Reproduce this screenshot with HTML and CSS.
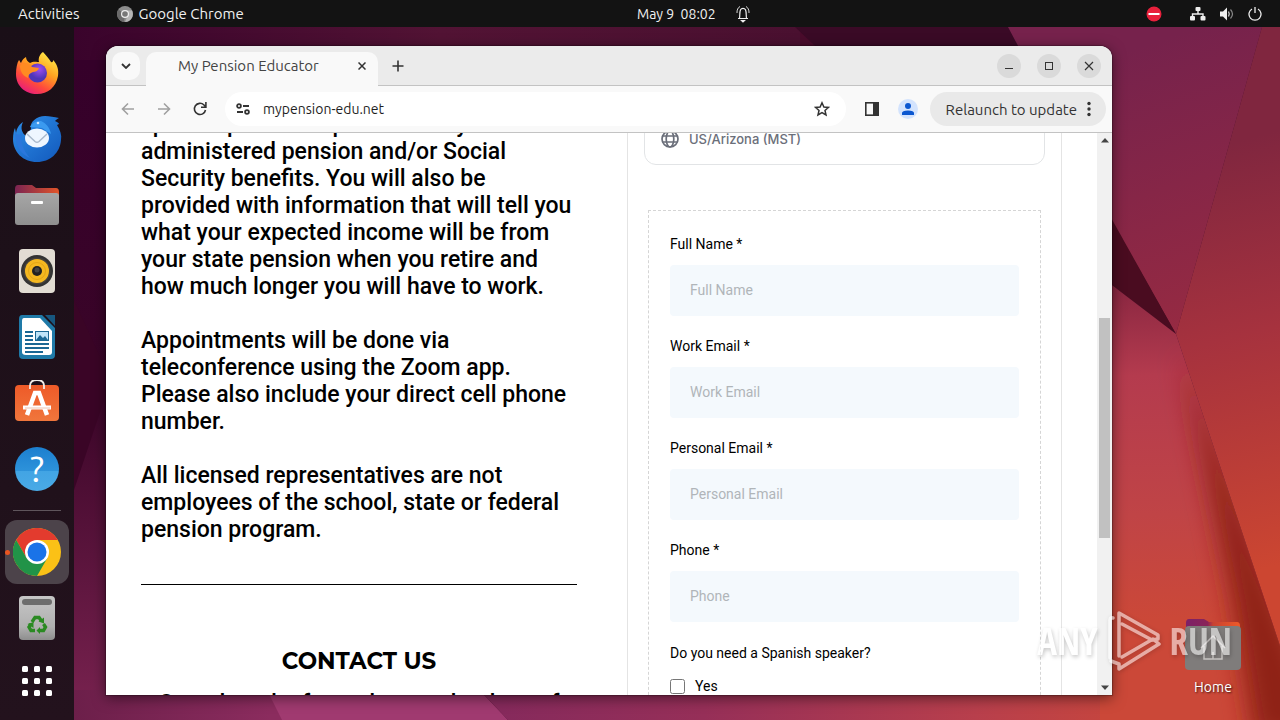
FILE: index.html
```html
<!DOCTYPE html>
<html lang="en">

<head>
    <meta charset="UTF-8">
    <meta name="viewport" content="width=device-width, initial-scale=1.0">
    <title>My Pension Educator</title>
    <link rel="stylesheet" href="styles.css">
</head>

<body>
    <!-- wallpaper -->
    <svg class="wallpaper" viewBox="0 0 1280 720" preserveAspectRatio="none" aria-hidden="true">
        <defs>
            <linearGradient id="wLeft" x1="0" y1="0" x2="0" y2="1">
                <stop offset="0" stop-color="#35002a" />
                <stop offset=".5" stop-color="#3a0528" />
                <stop offset="1" stop-color="#7a2350" />
            </linearGradient>
            <linearGradient id="wTop" x1="0" y1="0" x2="1" y2="0">
                <stop offset="0" stop-color="#35002a" />
                <stop offset=".55" stop-color="#521334" />
                <stop offset="1" stop-color="#4a1030" />
            </linearGradient>
            <linearGradient id="wBottom" x1="500" y1="0" x2="1180" y2="0" gradientUnits="userSpaceOnUse">
                <stop offset="0" stop-color="#862a5c" />
                <stop offset=".3" stop-color="#962f58" />
                <stop offset=".7" stop-color="#b83f4c" />
                <stop offset="1" stop-color="#cb4838" />
            </linearGradient>
            <linearGradient id="wLow" x1="74" y1="0" x2="270" y2="0" gradientUnits="userSpaceOnUse">
                <stop offset="0" stop-color="#6c1f4a" />
                <stop offset="1" stop-color="#8b2c5e" />
            </linearGradient>
            <linearGradient id="wUpper" x1="1100" y1="60" x2="1190" y2="330" gradientUnits="userSpaceOnUse">
                <stop offset="0" stop-color="#76224c" />
                <stop offset="1" stop-color="#962a42" />
            </linearGradient>
            <linearGradient id="wRight" x1="1200" y1="150" x2="1300" y2="560" gradientUnits="userSpaceOnUse">
                <stop offset="0" stop-color="#80263f" />
                <stop offset=".45" stop-color="#a6323e" />
                <stop offset="1" stop-color="#cc4631" />
            </linearGradient>
            <linearGradient id="wRed" x1="1140" y1="270" x2="1150" y2="620" gradientUnits="userSpaceOnUse">
                <stop offset="0" stop-color="#82233f" />
                <stop offset=".3" stop-color="#b43b4e" />
                <stop offset=".7" stop-color="#c04446" />
                <stop offset="1" stop-color="#cb4838" />
            </linearGradient>
            <clipPath id="redClip">
                <path d="M1100 276L1176 334L1280 646V720H1100Z" />
            </clipPath>
            <filter id="soft" x="-60%" width="220%">
                <feGaussianBlur stdDeviation="12" />
            </filter>
        </defs>
        <rect width="1280" height="720" fill="#4a0c2c" />
        <rect width="800" height="60" fill="url(#wTop)" />
        <path d="M795 27H1008L1030 60H830Z" fill="#3a0a26" />
        <path d="M0 60H110V720H0Z" fill="url(#wLeft)" />
        <path d="M74 300L104 365V400L74 490Z" fill="#3a0526" />
        <path d="M74 690H270L285 720H74Z" fill="url(#wLow)" />
        <path d="M262 680H470L508 720H282Z" fill="#a03a70" />
        <path d="M470 680H1280V720H508Z" fill="url(#wBottom)" />
        <path d="M1008 27H1262L1176 334L1100 200Z" fill="url(#wUpper)" />
        <path d="M1262 27H1280V646L1176 334Z" fill="url(#wRight)" />
        <path d="M1100 198L1176 334L1100 276Z" fill="#4a0c20" />
        <path d="M1100 276L1176 334L1280 646V720H1100Z" fill="url(#wRed)" />
        <g clip-path="url(#redClip)">
            <path d="M1182 352L1330 740H1254L1232 600Z" fill="#8f2019" filter="url(#soft)" />
        </g>
    </svg>

    <header class="topbar">
        <div class="topbar-left">
            <button>Activities</button>
            <button class="app-menu">
                <svg width="16" height="16" viewBox="0 0 16 16">
                    <circle cx="8" cy="8" r="8" fill="#8d8d8d" />
                    <path d="M8 8L1.5 3.5A8 8 0 0 0 7 16Z" fill="#6a6a6a" />
                    <path d="M8 4.500H15A8 8 0 0 1 8 16L11 9Z" fill="#b5b5b5" />
                    <circle cx="8" cy="8" r="4" fill="#eee" />
                    <circle cx="8" cy="8" r="2.800" fill="#777" />
                </svg>
                Google Chrome
            </button>
        </div>
        <div class="topbar-clock">
            <time>May 9&nbsp; 08:02</time>
            <svg width="14" height="18" viewBox="0 0 14 18" fill="none" stroke="#eee" stroke-width="1.200">
                <path d="M2 13.500H12M3.500 13C4 11 3.500 7 4.500 4.800C5.500 3 8.500 3 9.500 4.800C10.500 7 10 11 10.500 13" />
                <path d="M1 8C.8 5 2 2.500 4 1.500M13 8C13.200 5 12 2.500 10 1.500" stroke-width=".9" />
                <path d="M5.500 15.500H8.500L7 17Z" fill="#eee" />
            </svg>
        </div>
        <div class="topbar-status">
            <svg class="busy" width="16" height="16" viewBox="0 0 16 16">
                <circle cx="8" cy="8" r="7.500" fill="#e8203c" />
                <rect x="2.500" y="7" width="11" height="2" fill="#fff" />
            </svg>
            <svg width="16" height="14" viewBox="0 0 16 14">
                <rect x="5.500" width="5" height="4" rx="1" fill="#eee" />
                <rect x="0" y="9" width="5" height="4.500" rx="1" fill="#eee" />
                <rect x="10.500" y="9" width="5" height="4.500" rx="1" fill="#eee" />
                <path d="M8 4V7M2.500 9V7H13V9" fill="none" stroke="#eee" stroke-width="1.400" />
            </svg>
            <svg width="16" height="14" viewBox="0 0 16 14">
                <path d="M1 4.500H4L8 .5V13.500L4 9.500H1Z" fill="#eee" />
                <path d="M9.500 4.500Q11 7 9.500 9.500" fill="none" stroke="#ccc" stroke-width="1.300" />
                <path d="M11.500 2.500Q15.500 7 11.500 11.500" fill="none" stroke="#888" stroke-width="1.200" />
            </svg>
            <svg width="14" height="14" viewBox="0 0 14 14" fill="none" stroke="#eee" stroke-width="1.300">
                <path d="M4 2A6 6 0 1 0 10 2M7 0V6" />
            </svg>
        </div>
    </header>

    <main class="desktop">
        <nav class="dock" aria-label="Dock">
            <button class="dock-item" aria-label="Firefox">
                <svg width="46" height="46" viewBox="0 0 46 46">
                    <defs>
                        <linearGradient id="ff" x1=".8" y1="0" x2=".2" y2="1">
                            <stop offset="0" stop-color="#fff14a" />
                            <stop offset=".4" stop-color="#ffa020" />
                            <stop offset=".7" stop-color="#ff4a3c" />
                            <stop offset="1" stop-color="#e31587" />
                        </linearGradient>
                        <radialGradient id="ffGlobe" cx=".6" cy=".3">
                            <stop offset="0" stop-color="#a04cf0" />
                            <stop offset="1" stop-color="#4e35b8" />
                        </radialGradient>
                    </defs>
                    <path d="M29 2C32 5 35 9 37 12C39 13 39 11 39 10C43 14 45 19 44 26C42 37 34 44 23 44C11 44 2 36 2 24C2 18 3 13 5 10C6 11 6 12 7 13C8 10 10 8 12 7C12 10 14 12 16 13C19 11 23 12 25 12C24 8 26 4 29 2Z" fill="url(#ff)" />
                    <circle cx="23.500" cy="23" r="9.500" fill="url(#ffGlobe)" />
                    <path d="M6 16C10 11 15 13 18 17L25 18C24 21 21 22 19 22C16 23 14 25 14 28C9 26 6 21 6 16Z" fill="#ff8b22" />
                </svg>
            </button>
            <button class="dock-item" aria-label="Thunderbird">
                <svg width="50" height="50" viewBox="0 0 50 50">
                    <defs>
                        <linearGradient id="tb" x1="0" y1="0" x2="1" y2="1">
                            <stop offset="0" stop-color="#2e90ea" />
                            <stop offset="1" stop-color="#1258bb" />
                        </linearGradient>
                    </defs>
                    <path d="M11 8C8 14 10 19 14 22L19 15C17 8 25 2 33 2C38 2 42 3 47 4C45 5 44 6 43 7C45 8 47 9 47 10L45 11C48 16 50 21 49 26C48 39 38 48 25 48C11 48 1 38 1 25C1 20 2 16 3 14L4 19C5 13 8 10 11 8Z" fill="url(#tb)" />
                    <path d="M3 18C3 31 8 40 18 44C11 36 8 28 10 19C8 21 6 22 3 18Z" fill="#2a77dc" />
                    <path d="M18 13C20 9 24 7 29 7C34 9 38 14 39 20L30 14Z" fill="#3b9af0" />
                    <ellipse cx="25" cy="24" rx="12" ry="9.500" fill="#eef6ff" />
                    <path d="M15 20L23 27.500Q25 29 27 27.500L35 20" fill="none" stroke="#a9b9cc" stroke-width="1.500" />
                    <circle cx="26" cy="9" r="1.300" fill="#cfe6ff" />
                </svg>
            </button>
            <button class="dock-item" aria-label="Files">
                <svg width="46" height="42" viewBox="0 0 46 42">
                    <defs>
                        <linearGradient id="fold" x1="0" x2="1">
                            <stop offset="0" stop-color="#7a2452" />
                            <stop offset="1" stop-color="#e2552a" />
                        </linearGradient>
                        <linearGradient id="foldFront" x1="0" y1="0" x2="0" y2="1">
                            <stop offset="0" stop-color="#a6a6a6" />
                            <stop offset="1" stop-color="#8f8f8f" />
                        </linearGradient>
                    </defs>
                    <path d="M4 1H18L22 4H42Q45 4 45 8V20H1V5Q1 1 4 1Z" fill="url(#fold)" />
                    <rect x="1" y="9" width="44" height="32" rx="3" fill="url(#foldFront)" />
                    <rect x="17" y="17" width="12" height="3" rx="1" fill="#fff" />
                </svg>
            </button>
            <button class="dock-item" aria-label="Rhythmbox">
                <svg width="38" height="46" viewBox="0 0 38 46">
                    <rect x="1" y="1" width="36" height="44" rx="4" fill="#e2dcd3" />
                    <circle cx="19" cy="23" r="16" fill="#333" />
                    <circle cx="19" cy="23" r="13.500" fill="#45413c" />
                    <circle cx="19" cy="23" r="12" fill="#f5b820" />
                    <circle cx="19" cy="23" r="8.500" fill="none" stroke="#e3a616" />
                    <circle cx="19" cy="23" r="5" fill="#222" />
                    <circle cx="19" cy="22" r="2.500" fill="#444" />
                </svg>
            </button>
            <button class="dock-item" aria-label="LibreOffice Writer">
                <svg width="38" height="46" viewBox="0 0 38 46">
                    <path d="M4 1H24L37 14V41Q37 45 33 45H5Q1 45 1 41V5Q1 1 4 1Z" fill="#1f7aa8" />
                    <path d="M27 1H37V12Z" fill="#17577f" />
                    <path d="M6 4H22L34 17V38Q34 41 31 41H8Q4 41 4 38V7Q4 4 6 4Z" fill="#fff" />
                    <path d="M7 18H15M7 22H15M7 26H15M7 30H31M7 34H31M7 38H25" stroke="#1b6794" stroke-width="1.800" />
                    <rect x="17.500" y="17.500" width="13" height="9" fill="#bfe3f8" stroke="#1b6794" />
                    <path d="M18 26L22 21L25 24L27 22L30 26Z" fill="#1b6794" />
                </svg>
            </button>
            <button class="dock-item" aria-label="Ubuntu Software">
                <svg width="46" height="46" viewBox="0 0 46 46">
                    <defs>
                        <linearGradient id="bag" x1="0" y1="0" x2="0" y2="1">
                            <stop offset="0" stop-color="#ee5a28" />
                            <stop offset="1" stop-color="#f0763c" />
                        </linearGradient>
                    </defs>
                    <rect x="1" y="5" width="44" height="36" rx="4" fill="url(#bag)" />
                    <path d="M16 9V6Q16 0 23 0Q30 0 30 6V9" fill="none" stroke="#f3ece6" stroke-width="1.800" />
                    <path d="M13 35L21 13H25L33 35" fill="none" stroke="#fff" stroke-width="4.500" />
                    <path d="M9 27.500H37" stroke="#fff" stroke-width="4" />
                    <path d="M11 28H36" stroke="#e8b49c" stroke-width=".8" />
                </svg>
            </button>
            <button class="dock-item help" aria-label="Help"><span>?</span></button>
            <hr>
            <button class="dock-item active" aria-label="Google Chrome">
                <svg width="48" height="48" viewBox="0 0 48 48">
                    <circle cx="24" cy="24" r="24" fill="#fbc116" />
                    <path d="M24 24V12H44.800A24 24 0 0 0 3.200 12L13.600 30Z" fill="#e33b2e" />
                    <path d="M3.200 12A24 24 0 0 0 24 48L34.400 30L24 34L13.600 30Z" fill="#219348" />
                    <circle cx="24" cy="24" r="12" fill="#fff" />
                    <circle cx="24" cy="24" r="9.500" fill="#1a73e8" />
                </svg>
            </button>
            <button class="dock-item" aria-label="Trash">
                <svg width="38" height="46" viewBox="0 0 38 46">
                    <defs>
                        <linearGradient id="bin" x1="0" y1="0" x2="0" y2="1">
                            <stop offset="0" stop-color="#c6c6c6" />
                            <stop offset=".7" stop-color="#b0b0b0" />
                            <stop offset="1" stop-color="#8e8e8e" />
                        </linearGradient>
                    </defs>
                    <rect x="1" y="1" width="36" height="44" rx="4" fill="url(#bin)" />
                    <rect x="4" y="4" width="30" height="6" rx="3" fill="#6d6d6d" />
                    <path d="M14 27L17 22.500H21L23.500 26M25.500 29L27.500 32L25.500 35.500H21M17 35.500H13L11 32L13 29" fill="none" stroke="#2a8a22" stroke-width="3.400" />
                    <path d="M26 22.500V28.500L20.500 26.500ZM22 32V39L18.500 35.500ZM9.500 29L15.500 27L15.500 33Z" fill="#2a8a22" />
                </svg>
            </button>
            <button class="dock-item apps" aria-label="Show Applications">
                <svg width="30" height="30" viewBox="0 0 30 30" fill="#fff">
                    <rect width="6" height="6" rx="1.500" /><rect x="12" width="6" height="6" rx="1.500" /><rect x="24" width="6" height="6" rx="1.500" />
                    <rect y="12" width="6" height="6" rx="1.500" /><rect x="12" y="12" width="6" height="6" rx="1.500" /><rect x="24" y="12" width="6" height="6" rx="1.500" />
                    <rect y="24" width="6" height="6" rx="1.500" /><rect x="12" y="24" width="6" height="6" rx="1.500" /><rect x="24" y="24" width="6" height="6" rx="1.500" />
                </svg>
            </button>
        </nav>

        <section class="workspace">
            <a class="home" href="#">
                <svg width="56" height="52" viewBox="0 0 56 52">
                    <defs>
                        <linearGradient id="homeBack" x1="0" x2="1">
                            <stop offset="0" stop-color="#7c2068" />
                            <stop offset=".4" stop-color="#8a2458" />
                            <stop offset=".5" stop-color="#c84232" />
                            <stop offset="1" stop-color="#ee5a28" />
                        </linearGradient>
                    </defs>
                    <path d="M4 1H19L24 4H52Q55 4 55 8V20H1V5Q1 1 4 1Z" fill="url(#homeBack)" />
                    <rect x="0" y="8" width="56" height="44" rx="4" fill="#7f7c7b" />
                    <path d="M16 30L28 18L40 30M19 28V41H37V28M28 41V34" fill="none" stroke="#c9c5c3" stroke-width="1.500" />
                </svg>
                Home
            </a>

            <div class="window">
                <div class="tabstrip">
                    <button class="tab-search" aria-label="Search tabs">
                        <svg width="10" height="6" viewBox="0 0 10 6" fill="none" stroke="#333" stroke-width="1.800"><path d="M1 1L5 5L9 1" /></svg>
                    </button>
                    <div class="tab">
                        <span class="tab-title">My Pension Educator</span>
                        <button class="tab-close" aria-label="Close tab">
                            <svg width="8" height="8" viewBox="0 0 8 8" stroke="#333" stroke-width="1.500"><path d="M.5.5L7.500 7.500M7.500.5L.5 7.500" /></svg>
                        </button>
                    </div>
                    <button class="new-tab" aria-label="New tab">
                        <svg width="12" height="12" viewBox="0 0 12 12" stroke="#333" stroke-width="1.600"><path d="M6 .5V11.500M.5 6H11.500" /></svg>
                    </button>
                    <div class="window-buttons">
                        <button aria-label="Minimize"><svg width="10" height="10" viewBox="0 0 10 10" stroke="#333"><path d="M1 7.500H9" /></svg></button>
                        <button aria-label="Maximize"><svg width="10" height="10" viewBox="0 0 10 10" fill="none" stroke="#333"><rect x="1.500" y="1.500" width="7" height="7" /></svg></button>
                        <button aria-label="Close"><svg width="10" height="10" viewBox="0 0 10 10" stroke="#333" stroke-width="1.200"><path d="M1 1L9 9M9 1L1 9" /></svg></button>
                    </div>
                </div>

                <div class="toolbar">
                    <button class="tool" aria-label="Back">
                        <svg width="14" height="14" viewBox="0 0 14 14" fill="none" stroke="#a0a0a0" stroke-width="1.600"><path d="M13 7H2M7 1.500L1.500 7L7 12.500" /></svg>
                    </button>
                    <button class="tool" aria-label="Forward">
                        <svg width="14" height="14" viewBox="0 0 14 14" fill="none" stroke="#a0a0a0" stroke-width="1.600"><path d="M1 7H12M7 1.500L12.500 7L7 12.500" /></svg>
                    </button>
                    <button class="tool" aria-label="Reload">
                        <svg width="14" height="14" viewBox="0 0 14 14" fill="none" stroke="#333" stroke-width="1.600"><path d="M12.500 8A5.600 5.600 0 1 1 11 3L12.500 4.500M12.900 0V5.200H8" /></svg>
                    </button>
                    <div class="omnibox">
                        <button class="site-info" aria-label="Site information">
                            <svg width="14" height="12" viewBox="0 0 14 12" fill="none" stroke="#333" stroke-width="1.800"><circle cx="3" cy="3" r="1.900" /><path d="M7 3H13M1 9H7" /><circle cx="11" cy="9" r="1.900" /></svg>
                        </button>
                        <input class="url" type="text" value="mypension-edu.net" aria-label="Address" spellcheck="false">
                        <button class="site-info" aria-label="Bookmark this tab">
                            <svg width="16" height="16" viewBox="0 0 16 16" fill="none" stroke="#333" stroke-width="1.500"><path d="M8 1.800L9.900 6L14.500 6.400L11 9.500L12 14L8 11.600L4 14L5 9.500L1.500 6.400L6.100 6Z" /></svg>
                        </button>
                    </div>
                    <button class="tool" aria-label="Side panel">
                        <svg width="16" height="16" viewBox="0 0 16 16"><rect x="1.800" y="1.800" width="12.400" height="12.400" fill="none" stroke="#333" stroke-width="1.600" /><rect x="9" y="2" width="5" height="12" fill="#333" /></svg>
                    </button>
                    <button class="tool" aria-label="Profile">
                        <svg width="20" height="20" viewBox="0 0 20 20"><circle cx="10" cy="10" r="10" fill="#d3e3fd" /><circle cx="10" cy="7" r="3" fill="#0b57d0" /><path d="M4 16V14Q4 11.500 10 11.500Q16 11.500 16 14V16Z" fill="#0b57d0" /></svg>
                    </button>
                    <button class="relaunch">
                        Relaunch to update
                        <svg width="4" height="16" viewBox="0 0 4 16" fill="#333"><circle cx="2" cy="2.500" r="1.700" /><circle cx="2" cy="8" r="1.700" /><circle cx="2" cy="13.500" r="1.700" /></svg>
                    </button>
                </div>

                <div class="viewport">
                    <div class="page">
                        <div class="info">
                            <p>specific plans and protection by<br>
                                administered pension and/or Social<br>
                                Security benefits. You will also be<br>
                                provided with information that will tell you<br>
                                what your expected income will be from<br>
                                your state pension when you retire and<br>
                                how much longer you will have to work.</p>
                            <p>Appointments will be done via<br>
                                teleconference using the Zoom app.<br>
                                Please also include your direct cell phone<br>
                                number.</p>
                            <p>All licensed representatives are not<br>
                                employees of the school, state or federal<br>
                                pension program.</p>
                            <hr>
                            <h2>CONTACT US</h2>
                            <p class="contact">Complete the form above to book one f</p>
                        </div>
                        <div class="booking">
                            <div class="timezone">
                                <svg width="18" height="18" viewBox="0 0 18 18" fill="none" stroke="#6b6f7a" stroke-width="1.700">
                                    <circle cx="9" cy="9" r="8" />
                                    <ellipse cx="9" cy="9" rx="3.800" ry="8" />
                                    <path d="M1.500 6H16.500M1.500 12H16.500" />
                                </svg>
                                US/Arizona (MST)
                            </div>
                            <form class="form">
                                <label for="fullName">Full Name *</label>
                                <input class="field" type="text" id="fullName" placeholder="Full Name">
                                <label for="workEmail">Work Email *</label>
                                <input class="field" type="email" id="workEmail" placeholder="Work Email">
                                <label for="personalEmail">Personal Email *</label>
                                <input class="field" type="email" id="personalEmail" placeholder="Personal Email">
                                <label for="phone">Phone *</label>
                                <input class="field" type="tel" id="phone" placeholder="Phone">
                                <fieldset>
                                    <legend>Do you need a Spanish speaker?</legend>
                                    <label class="check"><input type="checkbox"> Yes</label>
                                </fieldset>
                            </form>
                        </div>
                    </div>
                    <div class="scrollbar">
                        <svg width="8" height="5" viewBox="0 0 8 5" fill="#444"><path d="M0 4.500L4 0L8 4.500Z" /></svg>
                        <div class="track"><div class="thumb"></div></div>
                        <svg width="8" height="5" viewBox="0 0 8 5" fill="#444"><path d="M0 .5L4 5L8 .5Z" /></svg>
                    </div>
                </div>
            </div>
        </section>
    </main>

    <!-- watermark -->
    <div class="watermark">
        <span>ANY</span>
        <svg width="56" height="62" viewBox="0 0 56 62" fill="none" stroke="#fff" stroke-width="3.500" stroke-linejoin="round" stroke-linecap="round">
            <path d="M4 48V10Q4 7 7 8M13 46V3L52 25V29L46 30L16 14" />
            <path d="M5 51L13 54V59L53 34L47 29L16 47" />
        </svg>
        <span>RUN</span>
    </div>
</body>

</html>
```
FILE: styles.css
```css
* {
    box-sizing: border-box;
}

body {
    margin: 0;
    height: 100vh;
    display: flex;
    flex-direction: column;
    overflow: hidden;
    background: #4a0c2c;
    font-family: Ubuntu, "Noto Sans", sans-serif;
    font-size: 15px;
}

button {
    margin: 0;
    padding: 0;
    border: 0;
    background: none;
    font: inherit;
    color: inherit;
    display: flex;
    align-items: center;
    justify-content: center;
}

svg {
    display: block;
    flex: none;
}

.wallpaper {
    position: absolute;
    inset: 0;
    width: 100%;
    height: 100%;
    z-index: -1;
}

/* top bar */
.topbar {
    display: grid;
    grid-template-columns: calc(50% - 3px) 1fr auto;
    flex: none;
    height: 27px;
    padding: 0 18px;
    background: #131313;
    color: #f0f0f0;
}

.topbar-left,
.topbar-clock,
.topbar-status {
    display: flex;
    align-items: center;
}

.topbar-left {
    gap: 37px;
}

.app-menu {
    gap: 6px;
}

.topbar-clock {
    gap: 20px;
    font-size: 14px;
}

.topbar-status {
    gap: 13px;
}

.busy {
    margin-right: 15px;
}

/* desktop */
.desktop {
    flex: 1;
    min-height: 0;
    display: flex;
}

.dock {
    width: 74px;
    flex: none;
    display: flex;
    flex-direction: column;
    align-items: center;
    gap: 2px;
    padding: 14px 0 7px;
    background: linear-gradient(#1a0f17, #23121d);
}

.dock-item {
    position: relative;
    width: 64px;
    height: 64px;
    border-radius: 12px;
    flex: none;
}

.dock-item.active {
    background: #4c434a;
}

.dock-item.active::before {
    content: "";
    position: absolute;
    left: 0;
    width: 5px;
    height: 5px;
    border-radius: 50%;
    background: #e95420;
}

.dock hr {
    width: 48px;
    margin: 7px 0;
    border: 0;
    border-top: 1px solid #5f555c;
}

.help span {
    width: 44px;
    height: 44px;
    border-radius: 50%;
    background: linear-gradient(#1c7fcf 0%, #2d92da 54%, #42a4e4 55%, #4aaae6 100%);
    color: #fff;
    font-size: 36px;
    line-height: 44px;
}

.dock .apps {
    height: 58px;
}

.workspace {
    position: relative;
    flex: 1;
}

.home {
    position: absolute;
    right: 39px;
    bottom: 24px;
    display: flex;
    flex-direction: column;
    align-items: center;
    gap: 8px;
    color: #fff;
    font-size: 14px;
    line-height: 18px;
    text-decoration: none;
    text-shadow: 1px 1px 2px rgba(0, 0, 0, 0.7);
}

/* browser window */
.window {
    position: absolute;
    top: 19px;
    right: 168px;
    bottom: 25px;
    left: 32px;
    display: flex;
    flex-direction: column;
    overflow: hidden;
    border-radius: 12px 12px 0 0;
    background: #fff;
    box-shadow: 0 3px 14px rgba(0, 0, 0, 0.5), 0 0 1px 1px rgba(0, 0, 0, 0.25);
}

.tabstrip {
    display: flex;
    align-items: center;
    flex: none;
    height: 40px;
    padding: 0 11px 0 6px;
    background: #ebebeb;
    border-bottom: 1px solid #c3c3c3;
    color: #444;
}

.tab-search {
    width: 28px;
    height: 28px;
    margin-right: 6px;
    border-radius: 10px;
    background: #f9f9f9;
}

.tab {
    align-self: flex-end;
    display: flex;
    align-items: center;
    width: 232px;
    height: 34px;
    margin-bottom: -1px;
    padding: 0 11px 7px 32px;
    border-radius: 10px 10px 0 0;
    background: #f9f9f9;
}

.tab-title {
    flex: 1;
}

.tab-close {
    width: 10px;
    height: 16px;
}

.new-tab {
    width: 28px;
    height: 28px;
    margin-left: 6px;
}

.window-buttons {
    display: flex;
    gap: 16px;
    margin-left: auto;
}

.window-buttons button {
    width: 24px;
    height: 24px;
    border-radius: 50%;
    background: #dadada;
}

.toolbar {
    display: flex;
    align-items: center;
    gap: 8px;
    flex: none;
    height: 47px;
    padding: 0 6px 0 8px;
    background: #f9f9f9;
    border-bottom: 1px solid #c3c3c3;
    color: #333;
}

.tool {
    width: 28px;
    height: 28px;
}

.omnibox {
    flex: 1;
    display: flex;
    align-items: center;
    height: 34px;
    margin: 0 4px 0 3px;
    padding: 0 12px 0 6px;
    border-radius: 17px;
    background: #fff;
}

.site-info {
    width: 24px;
    height: 24px;
}

.url {
    flex: 1;
    min-width: 0;
    margin: 0;
    padding: 0 8px;
    border: 0;
    outline: 0;
    background: none;
    font: inherit;
    font-size: 14px;
    color: #1f1f1f;
}

.relaunch {
    gap: 10px;
    height: 34px;
    padding: 0 15px 0 16px;
    border-radius: 17px;
    background: #e9e9e9;
}

/* page */
.viewport {
    flex: 1;
    min-height: 0;
    display: flex;
}

.page {
    flex: 1;
    display: flex;
    justify-content: space-between;
    overflow: hidden;
    padding: 0 35px;
    font-family: Roboto, sans-serif;
    color: #000;
}

.info {
    width: 436px;
    margin-top: -22px;
    font-size: 23px;
    font-weight: 500;
    line-height: 27px;
}

.info p {
    margin: 0 0 27px;
    white-space: nowrap;
}

.info hr {
    margin: 41px 0 0;
    border: 0;
    border-top: 1px solid #000;
}

.info h2 {
    margin: 61px 0 14px;
    font-family: Montserrat, Inter, sans-serif;
    font-size: 23px;
    font-weight: 700;
    line-height: 30px;
    text-align: center;
}

.info .contact {
    text-align: center;
}

.booking {
    width: 435px;
    padding: 0 16px;
    border: 1px solid #e4e4e4;
    border-width: 0 1px;
}

.timezone {
    display: flex;
    align-items: center;
    gap: 10px;
    height: 52px;
    margin-top: -20px;
    padding: 0 16px 1px;
    border: 1px solid #e2e4e6;
    border-radius: 12px;
    font-family: Inter, sans-serif;
    font-size: 13px;
    font-weight: 500;
    color: #6b6f7a;
}

.form {
    margin: 45px 4px 0;
    padding: 23px 21px;
    border: 1px dashed #d5d5d5;
    font-size: 14px;
    line-height: 20px;
}

.form label,
.form legend {
    display: block;
    padding: 0;
}

.field {
    display: block;
    width: 100%;
    height: 51px;
    margin: 11px 0 20px;
    padding: 0 20px 2px;
    border: 0;
    border-radius: 4px;
    background: #f4f9fd;
    font: inherit;
}

.field::placeholder {
    color: #b0b5b9;
}

.form fieldset {
    margin: 21px 0 0;
    padding: 0;
    border: 0;
}

.form .check {
    display: flex;
    align-items: center;
    gap: 10px;
    margin-top: 13px;
}

.check input {
    width: 15px;
    height: 15px;
    margin: 0;
}

.scrollbar {
    display: flex;
    flex-direction: column;
    align-items: center;
    width: 15px;
    padding: 5px 0;
    background: #f1f1f1;
}

.track {
    flex: 1;
    align-self: stretch;
    padding: 0 2px;
}

.thumb {
    height: 220px;
    margin-top: 175px;
    background: #c1c1c1;
}

.watermark {
    position: absolute;
    right: 48px;
    bottom: 48px;
    display: flex;
    align-items: center;
    gap: 8px;
    opacity: 0.55;
    color: #fff;
    font-family: "Open Sans Condensed", "Liberation Sans Narrow", "Open Sans", sans-serif;
    font-size: 37px;
    font-weight: 300;
    line-height: 62px;
    pointer-events: none;
    text-shadow: 1px 2px 4px rgba(0, 0, 0, 0.4);
}

.watermark svg {
    filter: drop-shadow(1px 1px 2px rgba(0, 0, 0, 0.3));
}
```
